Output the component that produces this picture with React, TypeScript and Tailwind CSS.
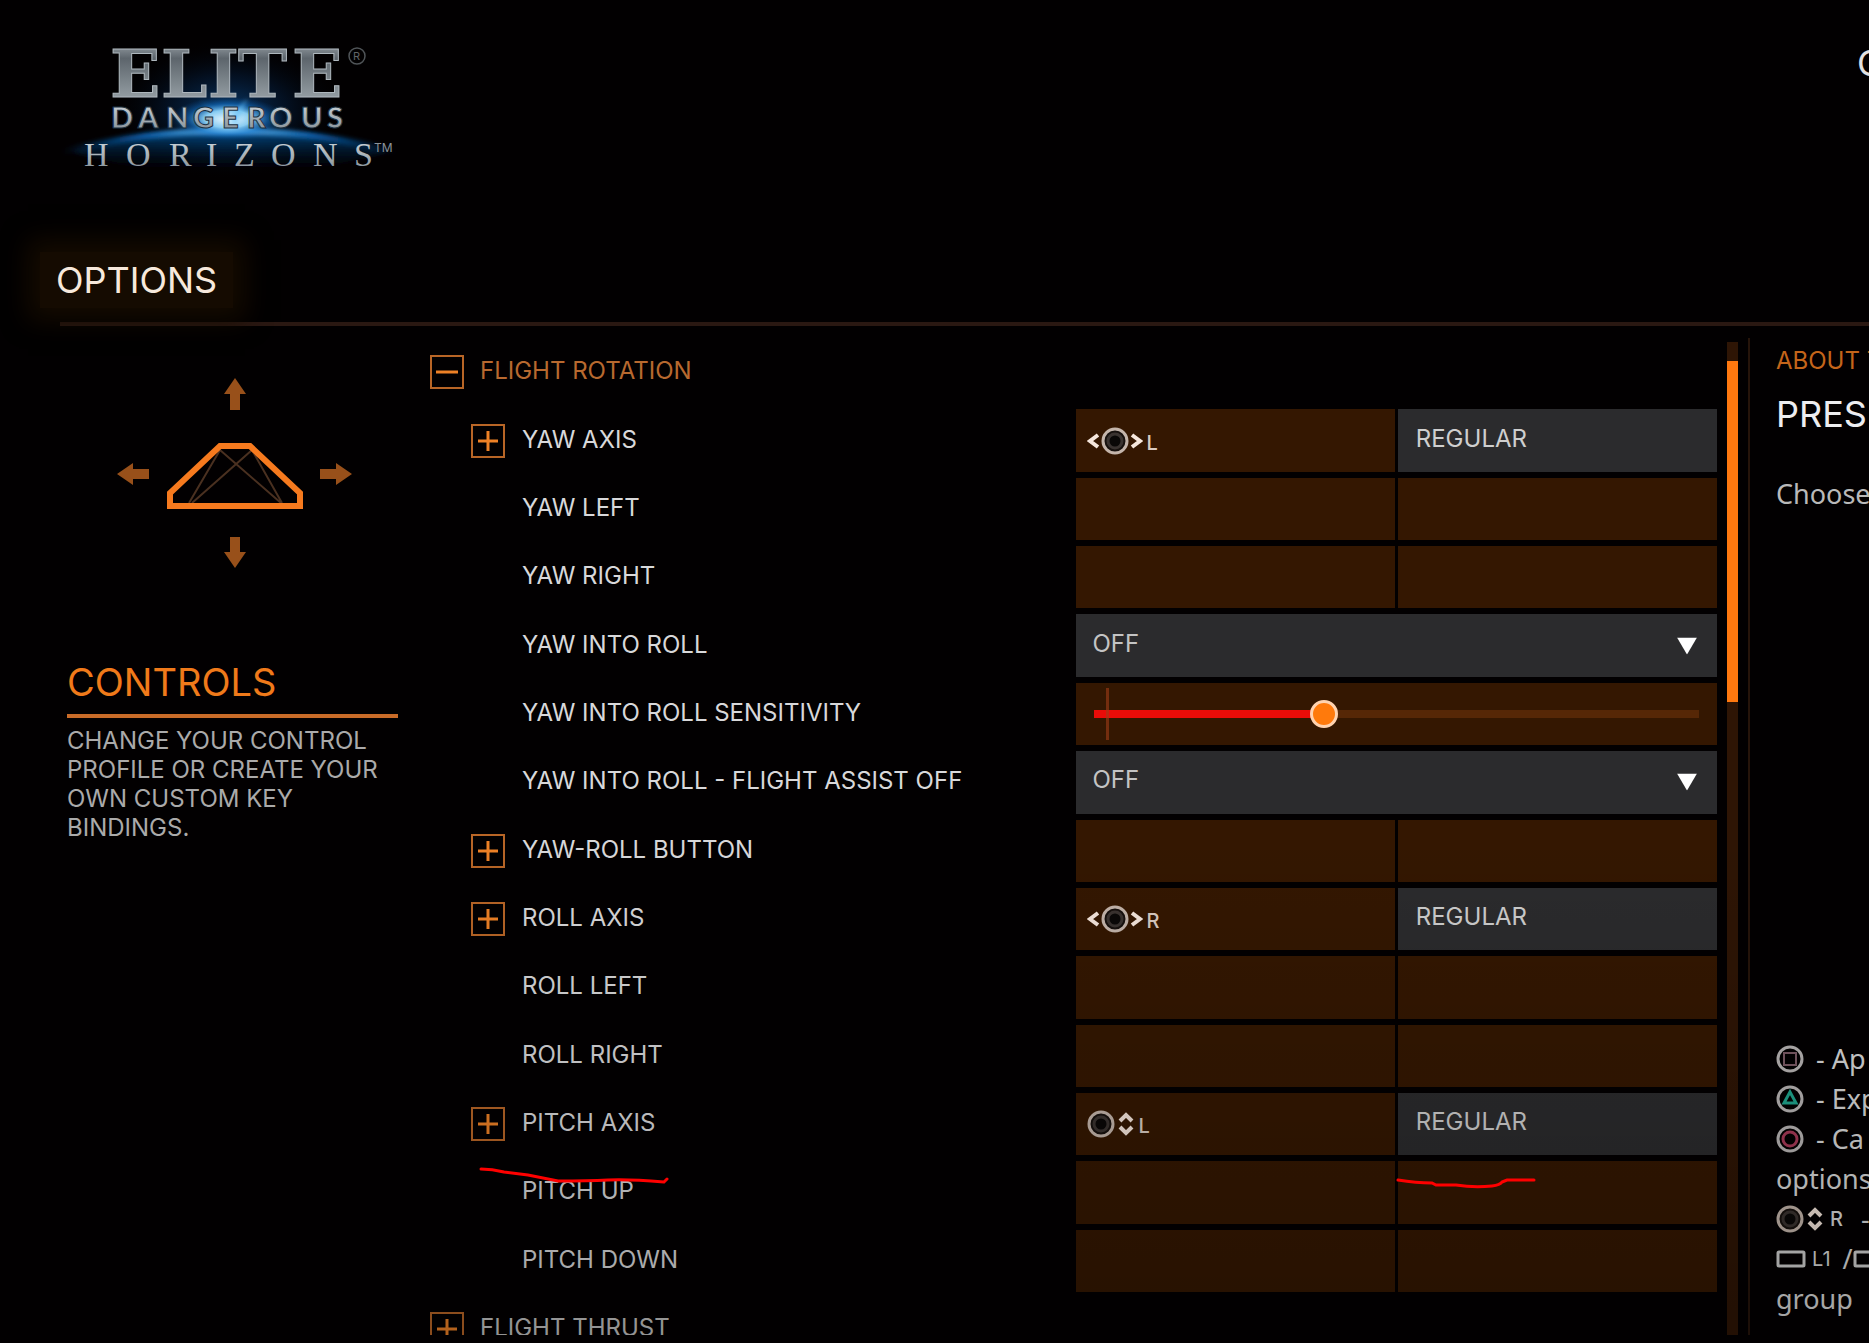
import type { ReactNode } from "react";

type Stick = "horizontal" | "vertical";

type Control =
  | { kind: "empty" }
  | { kind: "axis"; stick: Stick; side: string }
  | { kind: "select" }
  | { kind: "slider" };

type Row = { id: string; label: string; expandable?: boolean; control: Control; mark?: boolean };

const ROWS: Row[] = [
  { id: "yaw-axis", label: "YAW AXIS", expandable: true, control: { kind: "axis", stick: "horizontal", side: "L" } },
  { id: "yaw-left", label: "YAW LEFT", control: { kind: "empty" } },
  { id: "yaw-right", label: "YAW RIGHT", control: { kind: "empty" } },
  { id: "yaw-roll", label: "YAW INTO ROLL", control: { kind: "select" } },
  { id: "yaw-roll-sens", label: "YAW INTO ROLL SENSITIVITY", control: { kind: "slider" } },
  { id: "yaw-roll-fa", label: "YAW INTO ROLL - FLIGHT ASSIST OFF", control: { kind: "select" } },
  { id: "yaw-roll-button", label: "YAW-ROLL BUTTON", expandable: true, control: { kind: "empty" } },
  { id: "roll-axis", label: "ROLL AXIS", expandable: true, control: { kind: "axis", stick: "horizontal", side: "R" } },
  { id: "roll-left", label: "ROLL LEFT", control: { kind: "empty" } },
  { id: "roll-right", label: "ROLL RIGHT", control: { kind: "empty" } },
  { id: "pitch-axis", label: "PITCH AXIS", expandable: true, control: { kind: "axis", stick: "vertical", side: "L" } },
  { id: "pitch-up", label: "PITCH UP", control: { kind: "empty" }, mark: true },
  { id: "pitch-down", label: "PITCH DOWN", control: { kind: "empty" } },
];

function Logo() {
  return (
    <svg width="360" height="160" viewBox="50 30 360 160" role="img" aria-label="Elite Dangerous Horizons">
      <defs>
        <linearGradient id="metal" x1="0" y1="0" x2="0" y2="1">
          <stop offset="0" stopColor="#b4bcc2" />
          <stop offset="0.3" stopColor="#5d656c" />
          <stop offset="0.6" stopColor="#7d868c" />
          <stop offset="1" stopColor="#a9b2b8" />
        </linearGradient>
        <linearGradient id="silver" x1="0" y1="0" x2="0" y2="1">
          <stop offset="0" stopColor="#d5dde2" />
          <stop offset="1" stopColor="#7f8a92" />
        </linearGradient>
        <radialGradient id="sky">
          <stop offset="0" stopColor="#0d5fae" stopOpacity="0.6" />
          <stop offset="0.5" stopColor="#07366c" stopOpacity="0.3" />
          <stop offset="1" stopColor="#000" stopOpacity="0" />
        </radialGradient>
        <radialGradient id="sun">
          <stop offset="0" stopColor="#f2fbff" />
          <stop offset="0.4" stopColor="#8fd4fa" stopOpacity="0.95" />
          <stop offset="0.7" stopColor="#1377d2" stopOpacity="0.5" />
          <stop offset="1" stopColor="#0a4d94" stopOpacity="0" />
        </radialGradient>
        <linearGradient id="rim" x1="0" y1="0" x2="1" y2="0">
          <stop offset="0" stopColor="#06498c" stopOpacity="0" />
          <stop offset="0.25" stopColor="#0b5da8" />
          <stop offset="0.5" stopColor="#6cc6fa" />
          <stop offset="0.75" stopColor="#0b5da8" />
          <stop offset="1" stopColor="#06498c" stopOpacity="0" />
        </linearGradient>
        <linearGradient id="planet" x1="0" y1="0" x2="0" y2="1">
          <stop offset="0" stopColor="#0a5397" stopOpacity="0.85" />
          <stop offset="0.6" stopColor="#041c36" stopOpacity="0.4" />
          <stop offset="1" stopColor="#000" stopOpacity="0" />
        </linearGradient>
        <filter id="soft" x="-20%" y="-50%" width="140%" height="200%">
          <feGaussianBlur stdDeviation="2" />
        </filter>
      </defs>
      <ellipse cx="227" cy="110" rx="120" ry="70" fill="url(#sky)" />
      <path d="M72 152Q145 130 230 130T388 152Q300 176 230 176T72 152Z" fill="url(#planet)" filter="url(#soft)" />
      <path d="M62 152Q140 131 230 131T396 152" fill="none" stroke="url(#rim)" strokeWidth="6" filter="url(#soft)" />
      <ellipse cx="228" cy="119" rx="58" ry="22" fill="url(#sun)" />
      <path d="M196 98L228 120L248 98L236 124Z" fill="#69c3f8" opacity="0.7" filter="url(#soft)" />
      <text x="110 161 208 238 292" y="97" fontFamily="'DejaVu Serif', serif" fontWeight="700" fontSize="66" fill="url(#metal)" stroke="#aeb7bd" strokeWidth="1">
        ELITE
      </text>
      <circle cx="357" cy="56" r="8" fill="none" stroke="#505458" strokeWidth="1.5" />
      <text x="353" y="60" fontFamily="Inter, sans-serif" fontSize="11" fill="#606468">R</text>
      <text x="111 138 166 193 222 247 269 301 327" y="128" fontFamily="Lato, sans-serif" fontWeight="900" fontSize="29" fill="url(#silver)" stroke="#1c3142" strokeWidth="1">
        DANGEROUS
      </text>
      <text x="84 126 169 206 234 271 313 354" y="166" fontFamily="'Liberation Serif', serif" fontSize="34" fill="url(#silver)">
        HORIZONS
      </text>
      <text x="374" y="152" fontFamily="Inter, sans-serif" fontSize="12" fill="#8a9299">TM</text>
    </svg>
  );
}

function ShipDiagram() {
  return (
    <svg width="240" height="195" viewBox="115 375 240 195" aria-hidden="true">
      <g fill="#98501a">
        <path d="M235 378L246 394H240V410H230V394H224Z" />
        <path d="M235 568L246 552H240V537H230V552H224Z" />
        <path d="M117 474L133 463V469H149V479H133V485Z" />
        <path d="M352 474L336 463V469H320V479H336V485Z" />
      </g>
      <path d="M220 450L189 503M220 450L281 503M252 450L192 503M252 450L282 503" stroke="#4a3020" strokeWidth="2" fill="none" />
      <path d="M220 446H250L300 493V506H170V493Z" fill="none" stroke="#f67a1e" strokeWidth="6" />
    </svg>
  );
}

function ExpandBox({ open, label }: { open?: boolean; label: string }) {
  return (
    <button type="button" aria-label={label} aria-expanded={!!open} className="size-[34px] shrink-0">
      <svg width="34" height="34" viewBox="0 0 34 34" fill="none" aria-hidden="true">
        <rect x="1" y="1" width="32" height="32" stroke="#b86526" strokeWidth="2" />
        <path d={open ? "M6 17H28" : "M7 17H27M17 7V27"} stroke="#ee8126" strokeWidth="3" />
      </svg>
    </button>
  );
}

function StickIcon({ stick }: { stick: Stick }) {
  const horizontal = stick === "horizontal";
  const cx = horizontal ? 28 : 14;
  const arrows = horizontal ? "M11 8L3 14L11 20M45 8L53 14L45 20" : "M33 11L39 5L45 11M33 17L39 23L45 17";
  return (
    <svg
      className="shrink-0"
      width={horizontal ? 56 : 48}
      height="28"
      viewBox={horizontal ? "0 0 56 28" : "0 0 48 28"}
      fill="none"
      aria-hidden="true"
    >
      <circle cx={cx} cy="14" r="12" stroke="#c4b5ab" strokeWidth="3" fill="#17110e" />
      <circle cx={cx} cy="14" r="7" stroke="#3a3330" strokeWidth="3" fill="#0a0807" />
      <path d={arrows} stroke="#f5e6dc" strokeWidth="4" />
    </svg>
  );
}

function Cell({ children, label, grey }: { children?: ReactNode; label: string; grey?: boolean }) {
  return (
    <button
      type="button"
      aria-label={label}
      className={
        grey
          ? "flex items-center bg-[#2b2b2d] pb-1 pl-[18px] text-left text-[#cfcfcf]"
          : "flex items-center gap-1 bg-[#341701] pl-[11px] text-left text-[#d9cbc2]"
      }
    >
      {children}
    </button>
  );
}

function ControlView({ row }: { row: Row }) {
  const c = row.control;
  if (c.kind === "select") {
    return (
      <div className="relative h-full">
        <select
          id={row.id}
          defaultValue="OFF"
          className="h-full w-full appearance-none rounded-none bg-[#2b2b2d] pb-1 pl-[17px] text-[#c4c4c4] outline-none"
        >
          <option>OFF</option>
          <option>ON</option>
        </select>
        <svg className="pointer-events-none absolute top-1/2 right-5 -translate-y-1/2" width="20" height="17" viewBox="0 0 20 17" aria-hidden="true">
          <path d="M0 0H20L10 17Z" fill="#fff" />
        </svg>
      </div>
    );
  }
  if (c.kind === "slider") {
    return (
      <div className="flex h-full items-center bg-[#341701] px-[18px]">
        <div className="relative flex w-full items-center">
          <div className="absolute h-2 w-full bg-[#562706]" />
          <div className="absolute h-2 w-[37%] bg-[#ea0c08]" />
          <div className="absolute left-3 h-[52px] w-[3px] bg-[#a03c18]/60" />
          <input
            id={row.id}
            type="range"
            min={0}
            max={200}
            defaultValue={75}
            className="relative h-7 w-full appearance-none bg-transparent outline-none [&::-webkit-slider-thumb]:size-7 [&::-webkit-slider-thumb]:appearance-none [&::-webkit-slider-thumb]:rounded-full [&::-webkit-slider-thumb]:border-3 [&::-webkit-slider-thumb]:border-[#ffd3b0] [&::-webkit-slider-thumb]:bg-[#ff7a0c]"
          />
        </div>
      </div>
    );
  }
  return (
    <div className="relative grid h-full grid-cols-2 gap-[3px]">
      {c.kind === "axis" ? (
        <>
          <Cell label={row.label + " binding"}>
            <StickIcon stick={c.stick} />
            <span className="pt-1 text-xl leading-none font-medium">{c.side}</span>
          </Cell>
          <Cell label={row.label + " mode"} grey>
            REGULAR
          </Cell>
        </>
      ) : (
        <>
          <Cell label={row.label + " primary binding"} />
          <Cell label={row.label + " secondary binding"} />
        </>
      )}
      {row.mark && (
        <svg className="pointer-events-none absolute top-4 left-1/2 z-10" width="144" height="14" viewBox="0 0 144 14" fill="none" aria-hidden="true">
          <path d="M2 3Q20 6 36 6L40 8H60Q78 11 96 9Q104 8 106 5L111 3H138" stroke="#ff0000" strokeWidth="3" strokeLinecap="round" />
        </svg>
      )}
    </div>
  );
}

function SettingRow({ row }: { row: Row }) {
  return (
    <div className="relative flex min-h-14 flex-1 py-[3px]">
      <div className="flex w-1/2 items-center gap-[17px] pl-[41px]">
        {row.expandable ? <ExpandBox label={"Expand " + row.label} /> : <div className="w-[34px] shrink-0" />}
        <label htmlFor={row.id} className="pb-0.5 whitespace-nowrap text-[#d8d8da]">
          {row.label}
        </label>
      </div>
      <div className="w-1/2 pl-0.5">
        <ControlView row={row} />
      </div>
      {row.mark && (
        <svg className="pointer-events-none absolute top-2 left-12 z-10" width="192" height="18" viewBox="0 0 192 18" fill="none" aria-hidden="true">
          <path d="M3 3Q14 3 26 6L50 9L80 15Q110 15 130 14T186 16L189 13" stroke="#ff0000" strokeWidth="3" strokeLinecap="round" />
        </svg>
      )}
    </div>
  );
}

function FaceButton({ children }: { children: ReactNode }) {
  return (
    <svg className="shrink-0" width="28" height="28" viewBox="0 0 28 28" fill="none" aria-hidden="true">
      <circle cx="14" cy="14" r="12" stroke="#b9b5b5" strokeWidth="3" />
      {children}
    </svg>
  );
}

function Bumper() {
  return (
    <svg className="shrink-0" width="30" height="18" viewBox="0 0 30 18" fill="none" aria-hidden="true">
      <rect x="2" y="2" width="26" height="14" rx="1" stroke="#cfcfcf" strokeWidth="3" />
    </svg>
  );
}

function AboutPanel() {
  return (
    <aside className="flex w-[119px] flex-col overflow-hidden pl-[26px] whitespace-nowrap">
      <p className="pt-2 leading-[30px] text-[#c4651a]">ABOUT T</p>
      <h3 className="mt-[18px] text-[36px] leading-10 text-[#ededf0]">PRES</h3>
      <p className="mt-10 font-['Noto_Sans'] text-[27px] leading-10 text-[#b9b9b9]">Choose</p>
      <div className="mt-auto mb-4 font-['Noto_Sans'] text-[27px] leading-10 text-[#d8d8d8]">
        <p className="flex h-10 items-center gap-3">
          <FaceButton>
            <rect x="8" y="8" width="12" height="12" stroke="#7c5b66" strokeWidth="2" />
          </FaceButton>
          <span>- Ap</span>
        </p>
        <p className="flex h-10 items-center gap-3">
          <FaceButton>
            <path d="M14 7L20 18H8Z" stroke="#1fa48d" strokeWidth="3" />
          </FaceButton>
          <span>- Exp</span>
        </p>
        <p className="flex h-10 items-center gap-3">
          <FaceButton>
            <circle cx="14" cy="14" r="7" stroke="#a83a58" strokeWidth="3" />
          </FaceButton>
          <span>- Ca</span>
        </p>
        <p>options</p>
        <p className="flex h-10 items-center gap-1.5">
          <StickIcon stick="vertical" />
          <span className="font-[Inter] text-xl font-medium">R</span>
          <span className="ml-3">-</span>
        </p>
        <p className="flex h-10 items-center">
          <Bumper />
          <span className="ml-1.5 font-[Inter] text-xl">L1</span>
          <span className="ml-3">/</span>
          <Bumper />
        </p>
        <p>group</p>
      </div>
    </aside>
  );
}

export default function App() {
  return (
    <div className="flex h-screen flex-col overflow-hidden bg-[#020001] font-[Inter,sans-serif] text-2xl leading-[30px]">
      <header>
        <div className="flex justify-between pt-[30px] pl-[50px]">
          <Logo />
          <div className="mt-3 w-[13px] overflow-hidden pl-px text-[36px] leading-[42px] text-[#e2e2e2]">O</div>
        </div>
        <div className="flex pt-[62px] pb-5 pl-10">
          <h1 className="bg-[#150b01] px-4 py-2 text-[36px] leading-10 text-[#f7e9dc] shadow-[0_0_24px_12px_#150b01]">OPTIONS</h1>
        </div>
        <hr className="-mt-1.5 ml-[60px] h-1 border-0 bg-[#2a1812]" />
      </header>

      <main className="relative mb-2 flex min-h-0 flex-1 pt-3 pl-[67px]">
        <nav className="w-[331px] shrink-0">
          <div className="mt-[37px] ml-12">
            <ShipDiagram />
          </div>
          <h2 className="mt-[92px] border-b-4 border-[#c96b28] pb-3 text-[38px] leading-10 text-[#f07a1a]">CONTROLS</h2>
          <p className="mt-2 leading-[29px] text-[#aaaaaa]">CHANGE YOUR CONTROL PROFILE OR CREATE YOUR OWN CUSTOM KEY BINDINGS.</p>
        </nav>

        <section aria-label="Flight bindings" className="ml-8 flex min-w-0 flex-1 flex-col overflow-hidden">
          <div className="flex min-h-14 flex-1 items-center gap-4 py-[3px]">
            <ExpandBox open label="Collapse flight rotation" />
            <h2 className="pb-0.5 text-[#b8692f]">FLIGHT ROTATION</h2>
          </div>
          {ROWS.map((row) => (
            <SettingRow key={row.id} row={row} />
          ))}
          <div className="h-10 shrink-0 overflow-hidden">
            <div className="flex h-[68px] items-center gap-4">
              <ExpandBox label="Expand flight thrust" />
              <h2 className="pb-0.5 text-[#c4c4c4]">FLIGHT THRUST</h2>
            </div>
          </div>
        </section>

        <div className="mt-1 ml-2.5 w-[11px] shrink-0 bg-[#2e1505] pt-[19px]">
          <div className="h-[35%] bg-[#ff780f]" />
        </div>
        <div className="ml-2.5 w-0.5 shrink-0 bg-[#26140a]" />
        <AboutPanel />
        <div className="pointer-events-none absolute inset-0 bg-linear-to-b from-transparent from-50% to-black/25" />
      </main>
    </div>
  );
}
